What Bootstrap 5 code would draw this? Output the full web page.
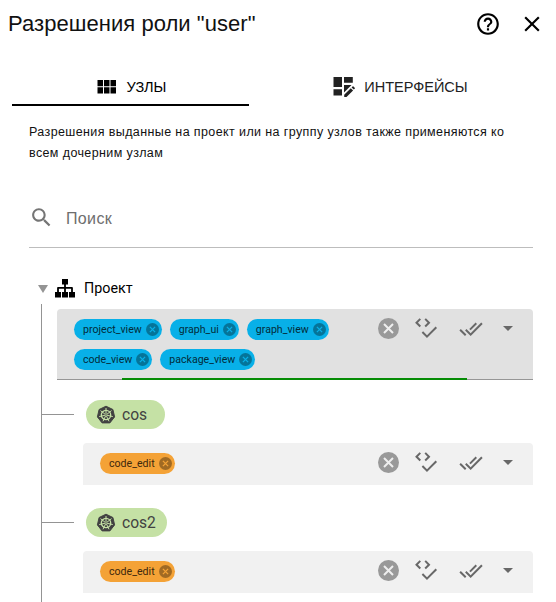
<!DOCTYPE html>
<html lang="ru">
<head>
<meta charset="utf-8">
<meta name="viewport" content="width=device-width, initial-scale=1">
<title>Разрешения роли</title>
<link href="https://cdn.jsdelivr.net/npm/bootstrap@5.3.0/dist/css/bootstrap.min.css" rel="stylesheet">
<style>
body{font-family:"Liberation Sans",Arial,sans-serif;color:#111;background:#fff;height:602px;overflow:hidden}
svg{display:block;flex:none}
.dlg-head{height:48px;padding:0 11px 0 8px}
.dlg-title{font-size:22px;line-height:48px;letter-spacing:.05px;color:#111}
.head-btns{gap:18px}
.head-btn{width:26px;height:26px}
.tabs{padding-left:12px;margin-top:20px;gap:32px}
.tabs .nav-link{width:237px;height:38px;padding:2px 0 0 2px;font-size:14.5px;color:#222;border-bottom:2px solid transparent;border-radius:0}
.tabs .nav-link.active{border-bottom-color:#000;color:#000}
.tabs .nav-link span{padding-top:1px}
.tabs .active svg{margin-right:8px!important}
.hint{margin:16px 23px 0 29px;font-size:12.5px;line-height:21px;letter-spacing:.39px;height:42px}
.search{margin:23px 23px 0 29px;height:61px;border-bottom:1px solid #bdbdbd;color:#6e6e6e;font-size:16px;letter-spacing:.35px}
.search span{padding:3px 0 0 4px}
.tree-head{margin-top:27px;padding-left:38px;height:27px;font-family:Roboto,sans-serif;font-size:14.3px;color:#000}
.tree-head .org{margin-left:7px}
.tree-head span{margin-left:9px;padding-top:1px}
.tree{margin-left:41px;padding:7px 23px 0 15px;border-left:1px solid #949494;margin-top:2px;height:320px}
.perm{font-family:Roboto,sans-serif;background:#f1f1f1;border-radius:4px 4px 0 0;padding:10px 0 0 17px;color:#686868}
.perm.main{height:71px;background:#e1e1e1;border-bottom:1px solid #969696;margin-top:-2px;position:relative}
.perm.sub{height:42px;margin-left:26px;margin-top:14px}
.progress-line{position:absolute;left:65px;bottom:-1px;width:345px;height:2px;background:#058c05}
.chips{width:270px;gap:9px 8px;--x:#08b0e8}
.perm.sub .chips{width:auto;--x:#f4a236}
.chip{height:21px;border-radius:11px;padding:0 3px 0 9px;font-size:10.6px;line-height:21px;background:#08b0e8;color:#032c3a}
.chip.orange{background:#f4a236;color:#3d280d}
.tools{height:19px;width:155px}
.tools .all{margin:0 20px 0 21px}
.node{height:29px;margin-left:-15px;margin-top:23px}
.perm.main + .node{margin-top:20px}
.node-line{width:32px;height:1px;background:#949494}
.pill{height:29px;width:79px;border-radius:15px;background:#c5e1a5;color:#424242;margin-left:12px;padding-left:10px;font:15.6px/29px Roboto,sans-serif}
.pill.wide{width:81px}
.pill span{margin-left:6px;padding-top:1px}
</style>
<script src="https://cdn.jsdelivr.net/npm/bootstrap@5.3.0/dist/js/bootstrap.bundle.min.js"></script>
</head>
<body>
<svg width="0" height="0" class="position-absolute">
<defs>
<symbol id="x-circle" viewBox="0 0 21 21"><circle cx="10.5" cy="10.5" r="10.5" fill="#999"/><path d="M6 6l9 9M15 6l-9 9" stroke="#eee" stroke-width="2"/></symbol>
<symbol id="x-small" viewBox="0 0 13 13"><circle cx="6.5" cy="6.5" r="6.5" fill="#000" fill-opacity=".34"/><path d="M3.9 3.9l5.2 5.2M9.1 3.9l-5.2 5.2" stroke="var(--x)" stroke-width="1.3"/></symbol>
<symbol id="code-check" viewBox="0 0 23 21"><path d="M5.300.9L1.500 4.700l3.800 3.800M10.200.9L14 4.700l-3.800 3.800M7.400 14l4.600 4.600 9.300-9.300" fill="none" stroke="#686868" stroke-width="2"/></symbol>
<symbol id="done-all" viewBox="0 0 24 24"><path fill="#686868" d="M18 7l-1.410-1.410-6.340 6.340 1.410 1.410L18 7zm4.240-1.410L11.660 16.170 7.480 12l-1.410 1.410L11.660 19l12-12-1.420-1.410zM.41 13.410L6 19l1.410-1.410L1.830 12 .41 13.410z"/></symbol>
<symbol id="caret" viewBox="0 0 10 5"><path d="M0 0h10L5 5z" fill="#686868"/></symbol>
<symbol id="helm" viewBox="0 0 20 20"><path d="M10 1.200l6.900 3.300 1.700 7.400-4.700 6H6.100l-4.700-6 1.700-7.400z" fill="#424242" stroke="#424242" stroke-linejoin="round"/><g stroke="#c5e1a5" fill="none"><circle cx="10" cy="10" r="4.700" stroke-width="1.300"/><path stroke-width="1" d="M10 10V3M10 10l5.500-4.400M10 10l6.800 1.600M10 10l3 6.300M10 10l-3 6.300M10 10l-6.800 1.600M10 10L4.500 5.600"/></g><circle cx="10" cy="10" r=".8" fill="#424242"/></symbol>
</defs>
</svg>

<header class="dlg-head d-flex align-items-center">
  <h1 class="dlg-title m-0 fw-normal">Разрешения роли "user"</h1>
  <div class="head-btns d-flex ms-auto">
    <svg class="head-btn" viewBox="0 0 24 24"><path d="M11 18h2v-2h-2v2zm1-16C6.480 2 2 6.480 2 12s4.480 10 10 10 10-4.480 10-10S17.520 2 12 2zm0 18c-4.410 0-8-3.590-8-8s3.590-8 8-8 8 3.590 8 8-3.590 8-8 8zm0-14c-2.210 0-4 1.790-4 4h2c0-1.100.9-2 2-2s2 .9 2 2c0 2-3 1.750-3 5h2c0-2.250 3-2.500 3-5 0-2.210-1.790-4-4-4z"/></svg>
    <svg class="head-btn" viewBox="0 0 24 24"><path d="M19 6.410L17.590 5 12 10.590 6.410 5 5 6.410 10.590 12 5 17.590 6.410 19 12 13.410 17.590 19 19 17.590 13.410 12z"/></svg>
  </div>
</header>

<nav class="tabs nav flex-nowrap">
  <a class="nav-link active d-flex align-items-center justify-content-center" href="#">
    <svg class="me-2" width="22" height="19" viewBox="0 0 22 19"><path d="M.5 2H6v6.300H.5zM7 2h5.500v6.300H7zM13.500 2H19v6.300h-5.500zM.5 9.300H6v6.200H.5zM7 9.300h5.500v6.200H7zM13.500 9.300H19v6.200h-5.500z"/></svg><span>УЗЛЫ</span>
  </a>
  <a class="nav-link d-flex align-items-center justify-content-center" href="#">
    <svg class="me-2" width="23" height="22" viewBox="0 0 23 22" fill="#222"><path d="M.5 1H9v10H.5zM11 1h8.800v5.800H11zM.5 13.200H9v6.300H.5zM11 9h7.500L11 16.500zM11.200 18.800l6.600-6.600 2.300 2.300-6.600 6.600h-2.300zM18.600 11.400l.9-.9q.5-.4 1 0l1.200 1.200q.5.500 0 1l-.9.900z"/></svg><span>ИНТЕРФЕЙСЫ</span>
  </a>
</nav>

<p class="hint">Разрешения выданные на проект или на группу узлов также применяются ко всем дочерним узлам</p>

<div class="search d-flex align-items-center">
  <svg width="25" height="25" viewBox="0 0 24 24" fill="#757575"><path d="M15.500 14h-.79l-.28-.27C15.410 12.590 16 11.110 16 9.500 16 5.910 13.090 3 9.500 3S3 5.910 3 9.500 5.910 16 9.500 16c1.610 0 3.090-.59 4.230-1.570l.27.28v.79l5 4.990L20.490 19l-4.990-5zm-6 0C7.010 14 5 11.990 5 9.500S7.010 5 9.500 5 14 7.010 14 9.500 11.990 14 9.500 14z"/></svg>
  <span class="ms-2">Поиск</span>
</div>

<div class="tree-head d-flex align-items-center">
  <svg width="10" height="8" viewBox="0 0 10 8"><path d="M0 0h10L5 8z" fill="#949494"/></svg>
  <svg class="org" width="20" height="19" viewBox="0 0 20 19"><path d="M7 0h6v5.500h-2.100V8H17q.9 0 .9.900V13H20v5.500h-6V13h2.100V9.700h-5.200V13H13v5.500H7V13h2.100V9.700H3.900V13H6v5.500H0V13h2.100V8.900Q2.100 8 3 8h6.100V5.500H7z"/></svg>
  <span>Проект</span>
</div>

<div class="tree">
  <div class="perm main d-flex">
    <div class="chips d-flex flex-wrap align-content-start">
      <span class="chip d-flex align-items-center">project_view<svg class="ms-1" width="13" height="13"><use href="#x-small"/></svg></span>
      <span class="chip d-flex align-items-center">graph_ui<svg class="ms-1" width="13" height="13"><use href="#x-small"/></svg></span>
      <span class="chip d-flex align-items-center">graph_view<svg class="ms-1" width="13" height="13"><use href="#x-small"/></svg></span>
      <span class="chip d-flex align-items-center">code_view<svg class="ms-1" width="13" height="13"><use href="#x-small"/></svg></span>
      <span class="chip d-flex align-items-center">package_view<svg class="ms-1" width="13" height="13"><use href="#x-small"/></svg></span>
    </div>
    <div class="tools ms-auto d-flex align-items-center"><svg width="21" height="21"><use href="#x-circle"/></svg><svg class="ms-3" width="23" height="21"><use href="#code-check"/></svg><svg class="all" width="24" height="24"><use href="#done-all"/></svg><svg width="10" height="5"><use href="#caret"/></svg></div>
    <div class="progress-line"></div>
  </div>

  <div class="node d-flex align-items-center"><div class="node-line"></div><div class="pill d-flex align-items-center"><svg width="20" height="20"><use href="#helm"/></svg><span>cos</span></div></div>
  <div class="perm sub d-flex">
    <div class="chips d-flex"><span class="chip orange d-flex align-items-center">code_edit<svg class="ms-1" width="13" height="13"><use href="#x-small"/></svg></span></div>
    <div class="tools ms-auto d-flex align-items-center"><svg width="21" height="21"><use href="#x-circle"/></svg><svg class="ms-3" width="23" height="21"><use href="#code-check"/></svg><svg class="all" width="24" height="24"><use href="#done-all"/></svg><svg width="10" height="5"><use href="#caret"/></svg></div>
  </div>

  <div class="node d-flex align-items-center"><div class="node-line"></div><div class="pill wide d-flex align-items-center"><svg width="20" height="20"><use href="#helm"/></svg><span>cos2</span></div></div>
  <div class="perm sub d-flex">
    <div class="chips d-flex"><span class="chip orange d-flex align-items-center">code_edit<svg class="ms-1" width="13" height="13"><use href="#x-small"/></svg></span></div>
    <div class="tools ms-auto d-flex align-items-center"><svg width="21" height="21"><use href="#x-circle"/></svg><svg class="ms-3" width="23" height="21"><use href="#code-check"/></svg><svg class="all" width="24" height="24"><use href="#done-all"/></svg><svg width="10" height="5"><use href="#caret"/></svg></div>
  </div>
</div>
</body>
</html>
